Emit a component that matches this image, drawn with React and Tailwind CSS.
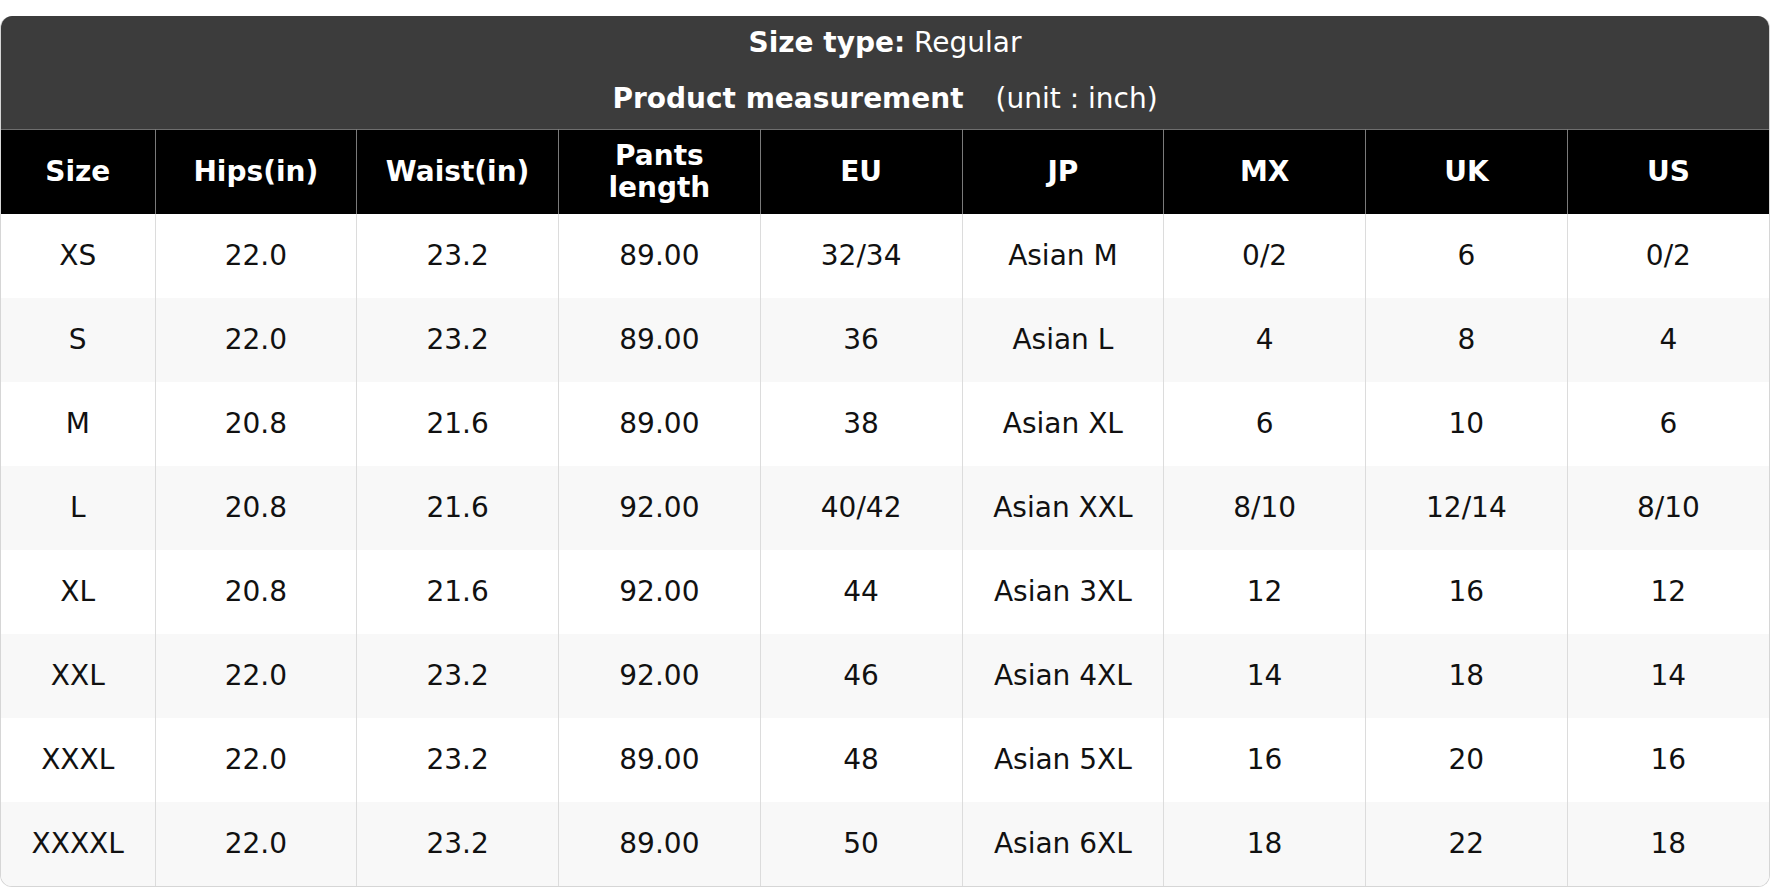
const columns = ['Size', 'Hips(in)', 'Waist(in)', 'Pants length', 'EU', 'JP', 'MX', 'UK', 'US'];

const rows = [
  ['XS', '22.0', '23.2', '89.00', '32/34', 'Asian M', '0/2', '6', '0/2'],
  ['S', '22.0', '23.2', '89.00', '36', 'Asian L', '4', '8', '4'],
  ['M', '20.8', '21.6', '89.00', '38', 'Asian XL', '6', '10', '6'],
  ['L', '20.8', '21.6', '92.00', '40/42', 'Asian XXL', '8/10', '12/14', '8/10'],
  ['XL', '20.8', '21.6', '92.00', '44', 'Asian 3XL', '12', '16', '12'],
  ['XXL', '22.0', '23.2', '92.00', '46', 'Asian 4XL', '14', '18', '14'],
  ['XXXL', '22.0', '23.2', '89.00', '48', 'Asian 5XL', '16', '20', '16'],
  ['XXXXL', '22.0', '23.2', '89.00', '50', 'Asian 6XL', '18', '22', '18'],
];

const App = () => {
  return (
    <div className="w-[1770px] h-[888px] bg-white pt-4 font-['DejaVu_Sans',sans-serif]">
      <div className="rounded-xl overflow-hidden border border-[#d6d6d6] border-t-0">
        {/* TITOLO */}
        <div className="bg-[#3c3c3c] text-white text-[28px] leading-[34px] text-center pt-[10px] pb-[13px] flex flex-col gap-[22px]">
          <div>
            <span className="font-bold">Size type:</span> Regular
          </div>
          <div>
            <span className="font-bold">Product measurement</span>
            <span className="ml-[32px]">(unit : inch)</span>
          </div>
        </div>

        {/* TABELLA */}
        <table className="w-full table-fixed border-collapse">
          <colgroup>
            <col className="w-[154px]" />
            {columns.slice(1).map((c) => (
              <col key={c} />
            ))}
          </colgroup>
          <thead>
            <tr className="bg-black text-white h-[84px] border-t border-[#6e6e6e]">
              {columns.map((c, i) => (
                <th
                  key={c}
                  className={`text-[28px] leading-[32px] font-bold text-center align-middle px-2 ${i > 0 ? 'border-l border-[#7a7a7a]' : ''}`}
                >
                  {c === 'Pants length' ? (
                    <>
                      Pants
                      <br />
                      length
                    </>
                  ) : (
                    c
                  )}
                </th>
              ))}
            </tr>
          </thead>
          <tbody>
            {rows.map((r, ri) => (
              <tr key={r[0]} className={`h-[84px] ${ri % 2 === 1 ? 'bg-[#f8f8f8]' : 'bg-white'}`}>
                {r.map((v, ci) => (
                  <td
                    key={ci}
                    className={`text-[28px] text-[#111] text-center align-middle ${ci > 0 ? 'border-l border-[#dcdcdc]' : ''}`}
                  >
                    {v}
                  </td>
                ))}
              </tr>
            ))}
          </tbody>
        </table>
      </div>
    </div>
  );
};

export default App;
